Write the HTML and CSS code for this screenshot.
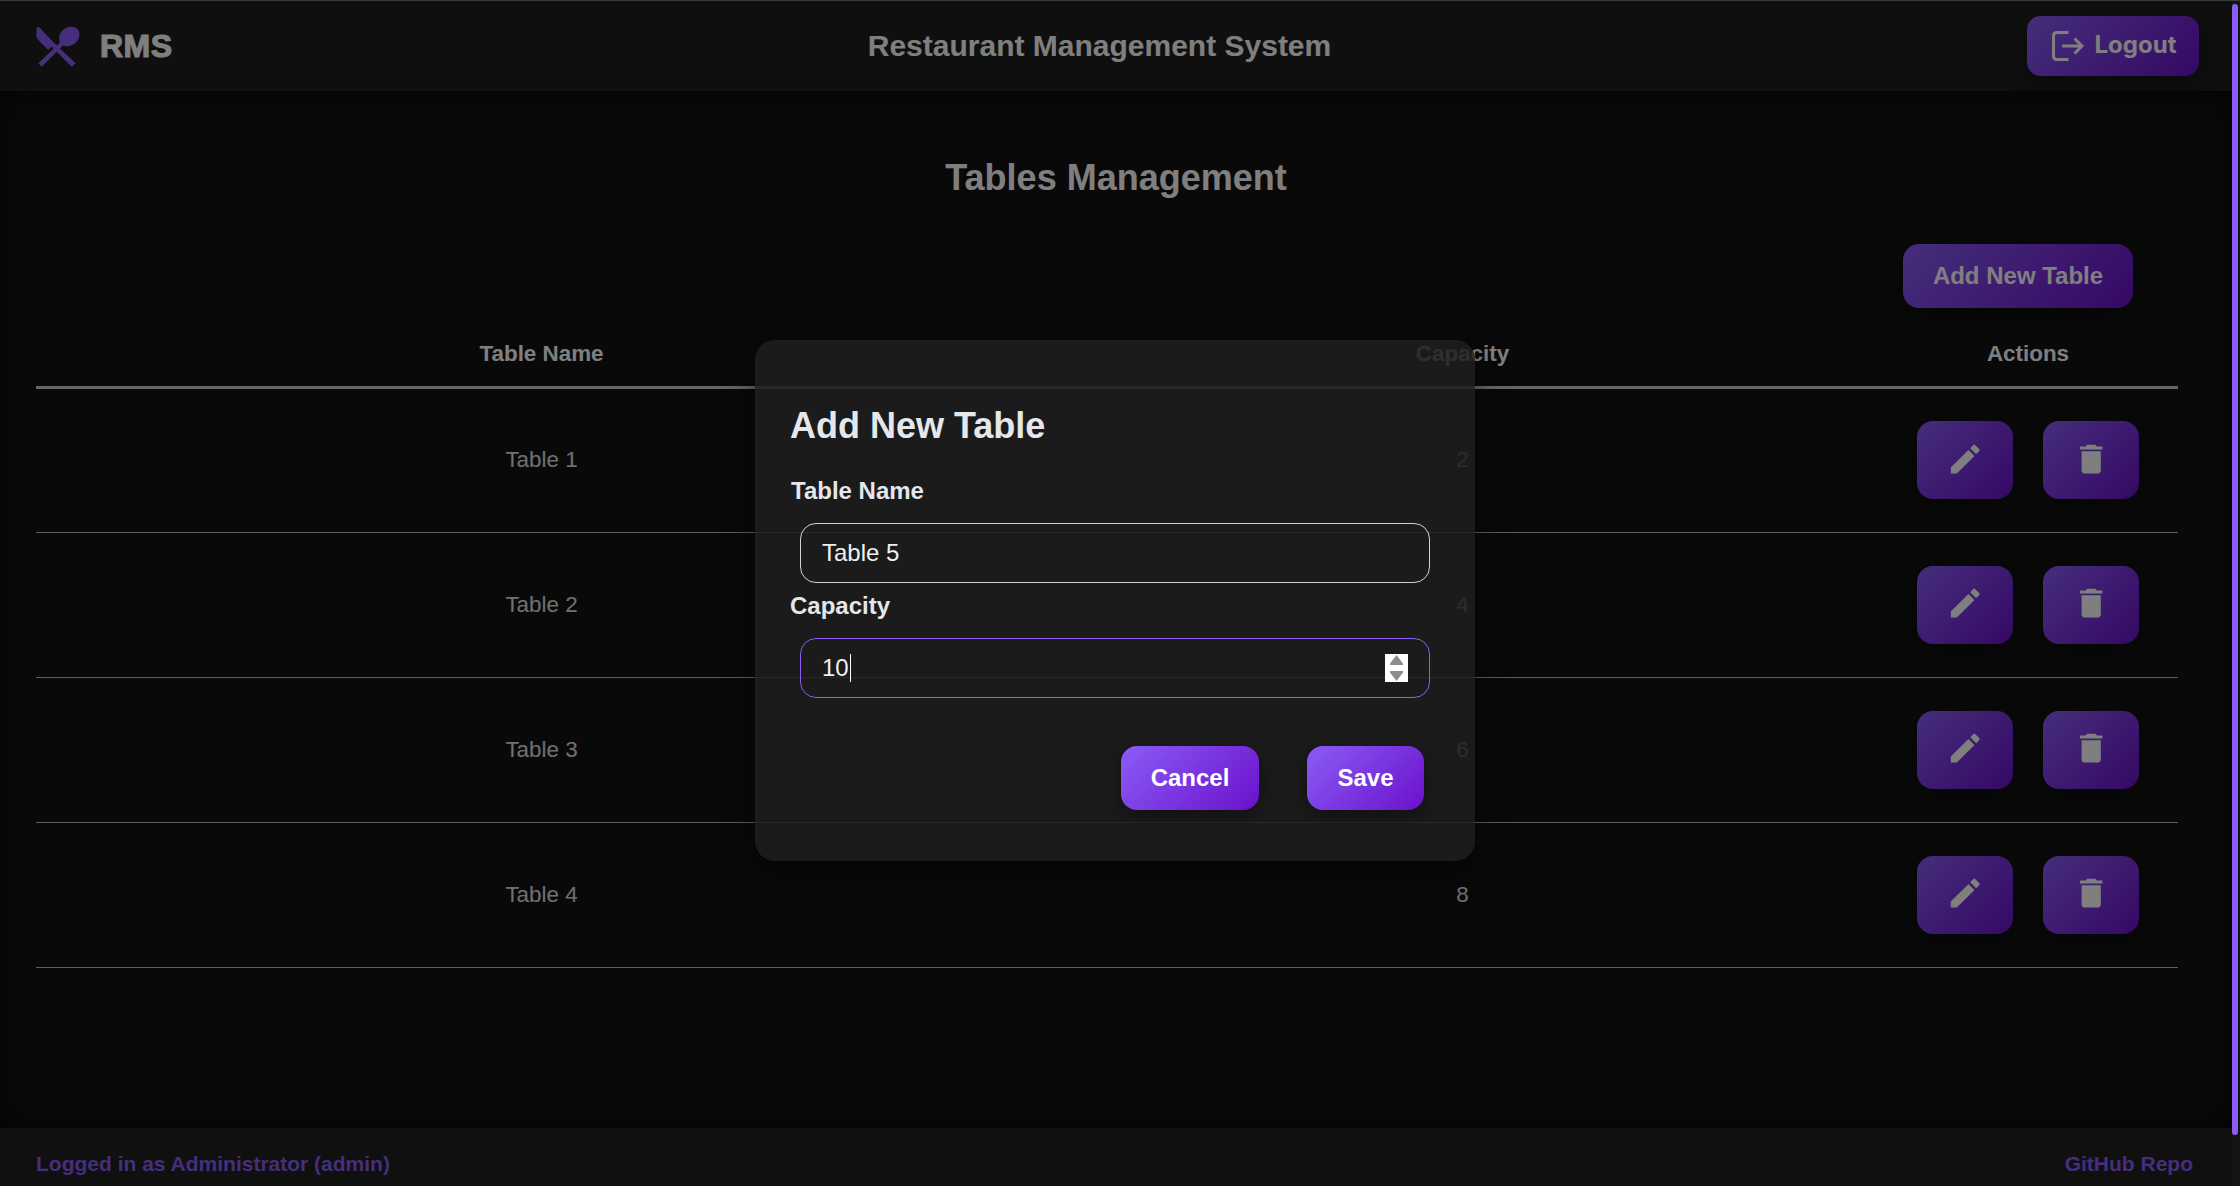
FILE: index.html
```html
<!DOCTYPE html>
<html lang="en">
<head>
<meta charset="utf-8">
<title>Restaurant Management System</title>
<link rel="stylesheet" href="styles.css">
</head>
<body>
<div class="app">
  <header class="topbar">
    <div class="brand">
      <svg class="brand-icon" viewBox="0 0 44 42" aria-hidden="true">
        <path d="M0.7 2.3 L3.3 2.3 L18.3 18.3 L39.7 38.3 L35.7 41.7 L15.5 21.5 L12.3 25 C6 19 1.5 15 0.3 11 Z"/>
        <path d="M2.3 38.3 L24 17.5 C22 13 23.5 8 27 5 C31 1.500 38 0.500 41.500 4 C45 8 43.500 14.500 39.500 18 C36 21 31 22 27 20.500 L5.700 41.700 Z"/>
      </svg>
      <span class="brand-name">RMS</span>
    </div>
    <div class="app-title">Restaurant Management System</div>
    <button class="btn logout">
      <svg class="logout-icon" viewBox="0 0 32 30" aria-hidden="true">
        <path d="M16.500 1.500 H5 Q1.500 1.500 1.500 5 V25 Q1.500 28.500 5 28.500 H16.500"/>
        <path d="M10 15 H30 M22.500 7.500 L30 15 L22.500 22.500"/>
      </svg>
      <span>Logout</span>
    </button>
  </header>

  <main class="content">
    <h2 class="page-title">Tables Management</h2>
    <div class="toolbar"><button class="btn add-btn">Add New Table</button></div>
    <table class="data">
      <colgroup><col class="c1"><col class="c2"><col class="c3"></colgroup>
      <thead><tr><th>Table Name</th><th>Capacity</th><th>Actions</th></tr></thead>
      <tbody>
        <tr><td>Table 1</td><td>2</td><td><div class="acts">
          <button class="btn icon-btn"><svg viewBox="0 0 24 24"><path d="M3 17.25V21h3.75L17.81 9.94l-3.75-3.75L3 17.25zM20.71 7.04c.39-.39.39-1.02 0-1.41l-2.34-2.34c-.39-.39-1.02-.39-1.41 0l-1.83 1.83 3.75 3.75 1.83-1.83z"/></svg></button>
          <button class="btn icon-btn"><svg viewBox="0 0 24 24"><path d="M6 19c0 1.1.9 2 2 2h8c1.1 0 2-.9 2-2V7H6v12zM19 4h-3.5l-1-1h-5l-1 1H5v2h14V4z"/></svg></button>
        </div></td></tr>
        <tr><td>Table 2</td><td>4</td><td><div class="acts">
          <button class="btn icon-btn"><svg viewBox="0 0 24 24"><path d="M3 17.25V21h3.75L17.81 9.94l-3.75-3.75L3 17.25zM20.71 7.04c.39-.39.39-1.02 0-1.41l-2.34-2.34c-.39-.39-1.02-.39-1.41 0l-1.83 1.83 3.75 3.75 1.83-1.83z"/></svg></button>
          <button class="btn icon-btn"><svg viewBox="0 0 24 24"><path d="M6 19c0 1.1.9 2 2 2h8c1.1 0 2-.9 2-2V7H6v12zM19 4h-3.5l-1-1h-5l-1 1H5v2h14V4z"/></svg></button>
        </div></td></tr>
        <tr><td>Table 3</td><td>6</td><td><div class="acts">
          <button class="btn icon-btn"><svg viewBox="0 0 24 24"><path d="M3 17.25V21h3.75L17.81 9.94l-3.75-3.75L3 17.25zM20.71 7.04c.39-.39.39-1.02 0-1.41l-2.34-2.34c-.39-.39-1.02-.39-1.41 0l-1.83 1.83 3.75 3.75 1.83-1.83z"/></svg></button>
          <button class="btn icon-btn"><svg viewBox="0 0 24 24"><path d="M6 19c0 1.1.9 2 2 2h8c1.1 0 2-.9 2-2V7H6v12zM19 4h-3.5l-1-1h-5l-1 1H5v2h14V4z"/></svg></button>
        </div></td></tr>
        <tr><td>Table 4</td><td>8</td><td><div class="acts">
          <button class="btn icon-btn"><svg viewBox="0 0 24 24"><path d="M3 17.25V21h3.75L17.81 9.94l-3.75-3.75L3 17.25zM20.71 7.04c.39-.39.39-1.02 0-1.41l-2.34-2.34c-.39-.39-1.02-.39-1.41 0l-1.83 1.83 3.75 3.75 1.83-1.83z"/></svg></button>
          <button class="btn icon-btn"><svg viewBox="0 0 24 24"><path d="M6 19c0 1.1.9 2 2 2h8c1.1 0 2-.9 2-2V7H6v12zM19 4h-3.5l-1-1h-5l-1 1H5v2h14V4z"/></svg></button>
        </div></td></tr>
      </tbody>
    </table>
  </main>

  <footer class="bottombar">
    <span>Logged in as Administrator (admin)</span>
    <a class="repo">GitHub Repo</a>
  </footer>

  <div class="overlay">
    <div class="modal">
      <h3 class="modal-title">Add New Table</h3>
      <label class="field-label">Table Name</label>
      <div class="field"><span>Table 5</span></div>
      <label class="field-label second">Capacity</label>
      <div class="field focused">
        <span>10</span><i class="caret"></i>
        <span class="spin">
          <svg viewBox="0 0 23 28" aria-hidden="true">
            <path class="arrow" d="M11.500 1 L18 9.500 V11 H5 V9.500 Z"/>
            <path class="arrow" d="M5 17 H18 V18.500 L11.500 27 L5 18.500 Z"/>
          </svg>
        </span>
      </div>
      <div class="modal-actions">
        <button class="btn bright cancel">Cancel</button>
        <button class="btn bright save">Save</button>
      </div>
    </div>
  </div>
</div>
<div class="scrollbar"><div class="thumb"></div></div>
</body>
</html>
```
FILE: styles.css
```css
* { box-sizing: border-box; }
html, body { height: 100%; }
body {
  margin: 0;
  display: flex;
  height: 1186px;
  overflow: hidden;
  border-top: 1px solid #3a3a3a;
  background: #121212;
  color: #fff;
  font-family: "Liberation Sans", Arial, sans-serif;
}
.app {
  position: relative;
  flex: 1;
  min-width: 0;
  display: flex;
  flex-direction: column;
}
.scrollbar {
  width: 8px;
  background: #151515;
  padding: 3px 2px 51px 0;
  display: flex;
}
.thumb { flex: 1; background: #8b5cf6; border-radius: 3px; }

.btn {
  border: 0;
  color: #fff;
  background: linear-gradient(135deg, #8b5cf6, #6a11cb);
  font-family: "Liberation Sans", Arial, sans-serif;
  font-weight: 700;
  border-radius: 16px;
  box-shadow: 0 6px 20px rgba(0, 0, 0, 0.4);
  padding: 0;
  display: flex;
  align-items: center;
  justify-content: center;
}

.topbar {
  height: 90px;
  flex: none;
  background: #1e1e1e;
  display: flex;
  align-items: center;
  justify-content: space-between;
  padding: 0 33px 0 36px;
}
.brand { display: flex; align-items: center; gap: 20px; width: 136px; }
.brand-icon { width: 44px; height: 42px; fill: #8b5cf6; flex: none; }
.brand-name {
  font-size: 32px;
  font-weight: 700;
  -webkit-text-stroke: 1.1px #fff;
  letter-spacing: 0.5px;
  color: #fff;
  line-height: 1;
}
.app-title { font-size: 30px; font-weight: 700; color: #fff; margin-top: -1px; }
.logout {
  width: 172px;
  height: 60px;
  border-radius: 14px;
  gap: 11px;
  font-family: Inter, sans-serif;
  font-weight: 700;
  font-size: 24px;
}
.logout span { position: relative; top: -2px; }
.logout-icon {
  width: 32px;
  height: 30px;
  fill: none;
  stroke: #fff;
  stroke-width: 3;
  margin-left: 2px;
}

.content {
  flex: 1;
  padding: 66px 54px 0 36px;
  background: #121212;
  box-shadow: inset 0 0 30px rgba(0, 0, 0, 0.7);
}
.page-title {
  margin: 0 -18px 46px 0;
  text-align: center;
  font-size: 36px;
  line-height: 41px;
  font-weight: 700;
  color: #fff;
}
.toolbar { display: flex; justify-content: flex-end; margin: 0 45px 11px 0; }
.add-btn { width: 230px; height: 64px; font-size: 24px; }

.data { width: 2142px; table-layout: fixed; border-collapse: collapse; }
.c1 { width: 1011px; }
.c2 { width: 831px; }
.c3 { width: 300px; }
.data th {
  height: 68px;
  font-size: 22.4px;
  font-weight: 700;
  color: #fff;
  border-bottom: 3px solid #ccc;
  padding: 3px 0 0;
  text-align: center;
}
.data td {
  height: 145px;
  font-size: 22.4px;
  color: #e0e0e0;
  border-bottom: 1px solid #bbb;
  padding: 0;
  text-align: center;
}
.acts { display: flex; justify-content: center; gap: 30px; }
.icon-btn { width: 96px; height: 78px; }
.icon-btn svg { width: 38.4px; height: 38.4px; fill: #fff; position: relative; top: -1px; }

.bottombar {
  height: 58px;
  flex: none;
  background: #202020;
  display: flex;
  align-items: center;
  justify-content: space-between;
  padding: 14px 39px 0 36px;
  font-size: 21px;
  font-weight: 700;
  color: #8b5cf6;
}

.overlay {
  position: absolute;
  inset: 0;
  background: rgba(0, 0, 0, 0.5);
  display: flex;
  align-items: center;
  justify-content: center;
  padding: 13px 2px 0 0;
}
.modal {
  width: 720px;
  height: 521px;
  padding: 65px 35px 50px;
  border-radius: 20px;
  background: rgba(31, 31, 31, 0.84);
  box-shadow: 0 10px 30px rgba(0, 0, 0, 0.5);
  color: #e5e7eb;
}
.modal-title {
  margin: 0 0 32px;
  font-size: 36px;
  line-height: 41px;
  font-weight: 700;
}
.field-label {
  display: block;
  margin: 0 0 19px 1px;
  font-size: 24px;
  line-height: 26px;
  font-weight: 700;
}
.field-label.second { margin: 10px 0 19px 0; }
.field {
  margin: 0 10px;
  height: 60px;
  border: 1px solid #d0d0d0;
  border-radius: 16px;
  padding: 0 21px;
  font-size: 24px;
  color: #f0f0f0;
  display: flex;
  align-items: center;
}
.field.focused { border-color: #8b5cf6; }
.caret { width: 1px; height: 28px; background: #fff; margin-left: 1px; }
.spin {
  margin-left: auto;
  width: 23px;
  height: 28px;
  background: #fff;
  display: block;
}
.spin svg { display: block; width: 23px; height: 28px; }
.arrow { fill: #8c8c8c; }
.modal-actions { display: flex; justify-content: flex-end; gap: 48px; margin: 48px 16px 0 0; }
.bright { height: 64px; font-size: 24px; }
.cancel { width: 138px; }
.save { width: 117px; }
```
